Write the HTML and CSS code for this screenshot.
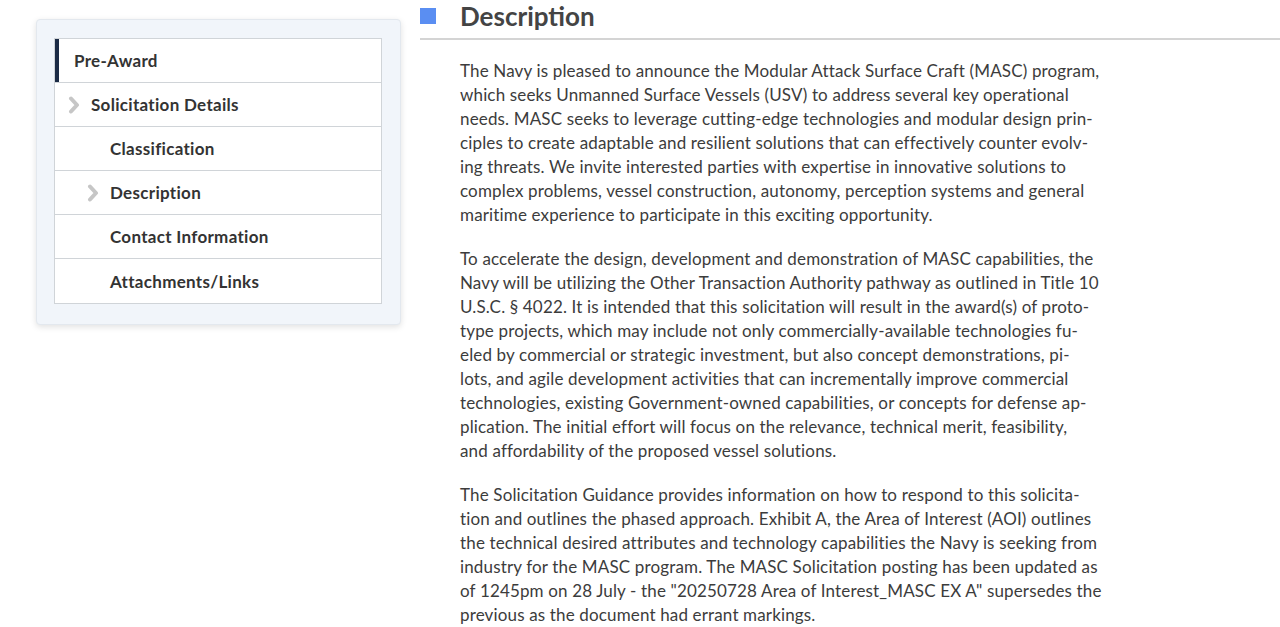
FILE: index.html
```html
<!DOCTYPE html>
<html lang="en">
<head>
<meta charset="utf-8">
<title>Description</title>
<link rel="stylesheet" href="styles.css">
</head>
<body>
<div class="page">
  <aside class="side">
    <div class="card">
      <ul class="nav">
        <li class="item level0 active"><span class="label">Pre-Award</span></li>
        <li class="item level1"><svg class="chev" viewBox="0 0 12 18" width="12" height="18"><polyline points="3,2.5 9,9 3,15.5" /></svg><span class="label">Solicitation Details</span></li>
        <li class="item level2"><span class="label">Classification</span></li>
        <li class="item level2 with-chev"><svg class="chev" viewBox="0 0 12 18" width="12" height="18"><polyline points="3,2.5 9,9 3,15.5" /></svg><span class="label">Description</span></li>
        <li class="item level2"><span class="label">Contact Information</span></li>
        <li class="item level2"><span class="label">Attachments/Links</span></li>
      </ul>
    </div>
  </aside>
  <main class="content">
    <h2 class="section-title"><span class="marker"></span><span>Description</span></h2>
    <div class="body">
      <p><span>The Navy is pleased to announce the Modular Attack Surface Craft (MASC) program,</span><span>which seeks Unmanned Surface Vessels (USV) to address several key operational</span><span>needs. MASC seeks to leverage cutting-edge technologies and modular design prin-</span><span>ciples to create adaptable and resilient solutions that can effectively counter evolv-</span><span>ing threats. We invite interested parties with expertise in innovative solutions to</span><span>complex problems, vessel construction, autonomy, perception systems and general</span><span>maritime experience to participate in this exciting opportunity.</span></p>
      <p><span>To accelerate the design, development and demonstration of MASC capabilities, the</span><span>Navy will be utilizing the Other Transaction Authority pathway as outlined in Title 10</span><span>U.S.C. § 4022. It is intended that this solicitation will result in the award(s) of proto-</span><span>type projects, which may include not only commercially-available technologies fu-</span><span>eled by commercial or strategic investment, but also concept demonstrations, pi-</span><span>lots, and agile development activities that can incrementally improve commercial</span><span>technologies, existing Government-owned capabilities, or concepts for defense ap-</span><span>plication. The initial effort will focus on the relevance, technical merit, feasibility,</span><span>and affordability of the proposed vessel solutions.</span></p>
      <p><span>The Solicitation Guidance provides information on how to respond to this solicita-</span><span>tion and outlines the phased approach. Exhibit A, the Area of Interest (AOI) outlines</span><span>the technical desired attributes and technology capabilities the Navy is seeking from</span><span>industry for the MASC program. The MASC Solicitation posting has been updated as</span><span>of 1245pm on 28 July - the "20250728 Area of Interest_MASC EX A" supersedes the</span><span>previous as the document had errant markings.</span></p>
    </div>
  </main>
</div>
</body>
</html>
```

FILE: styles.css
```css
html, body {
  margin: 0;
  padding: 0;
  background: #ffffff;
}
body {
  font-family: Lato, "Liberation Sans", sans-serif;
  color: #333333;
  overflow: hidden;
  height: 627px;
}
.page {
  display: flex;
  align-items: flex-start;
}
.side {
  width: 365px;
  margin-left: 36px;
  margin-top: 19px;
  flex: none;
}
.card {
  background: #f1f5fa;
  border: 1px solid #e3e8ee;
  border-radius: 4px;
  box-shadow: 0 2px 6px rgba(0, 0, 0, 0.12);
  padding: 18px 18px 20px 17px;
}
.nav {
  list-style: none;
  margin: 0;
  padding: 0;
  background: #ffffff;
  border: 1px solid #d0d4d8;
}
.item {
  height: 44px;
  display: flex;
  align-items: center;
  border-top: 1px solid #d0d4d8;
  font-size: 17px;
  font-weight: 700;
  letter-spacing: 0.3px;
  color: #333;
  box-sizing: border-box;
}
.item:first-child {
  border-top: none;
  height: 43px;
}
.item:last-child {
  height: 45px;
}
.level0 { padding-left: 19px; }
.level1 { padding-left: 13px; }
.level2 { padding-left: 55px; }
.level2.with-chev { padding-left: 32px; }
.active {
  border-left: 4px solid #1b2b45;
  padding-left: 15px;
}
.chev {
  flex: none;
  margin-right: 11px;
  fill: none;
  stroke: #c6c6c6;
  stroke-width: 4;
  stroke-linecap: round;
  stroke-linejoin: round;
}
.content {
  flex: 1;
  margin-left: 19px;
}
.section-title {
  margin: 0;
  height: 38px;
  border-bottom: 2px solid #d4d4d4;
  display: flex;
  align-items: flex-start;
  font-size: 26px;
  font-weight: 700;
  color: #444;
  line-height: 32px;
}
.marker {
  width: 16px;
  height: 16px;
  background: #5a8ef2;
  margin-top: 8px;
  margin-right: 24px;
  flex: none;
}
.body {
  padding-left: 40px;
  padding-top: 19px;
}
.body p {
  margin: 0 0 20px;
  font-size: 17px;
  line-height: 24px;
  letter-spacing: 0.15px;
  color: #3c3c3c;
}
.body p span {
  display: block;
  white-space: nowrap;
}
```
